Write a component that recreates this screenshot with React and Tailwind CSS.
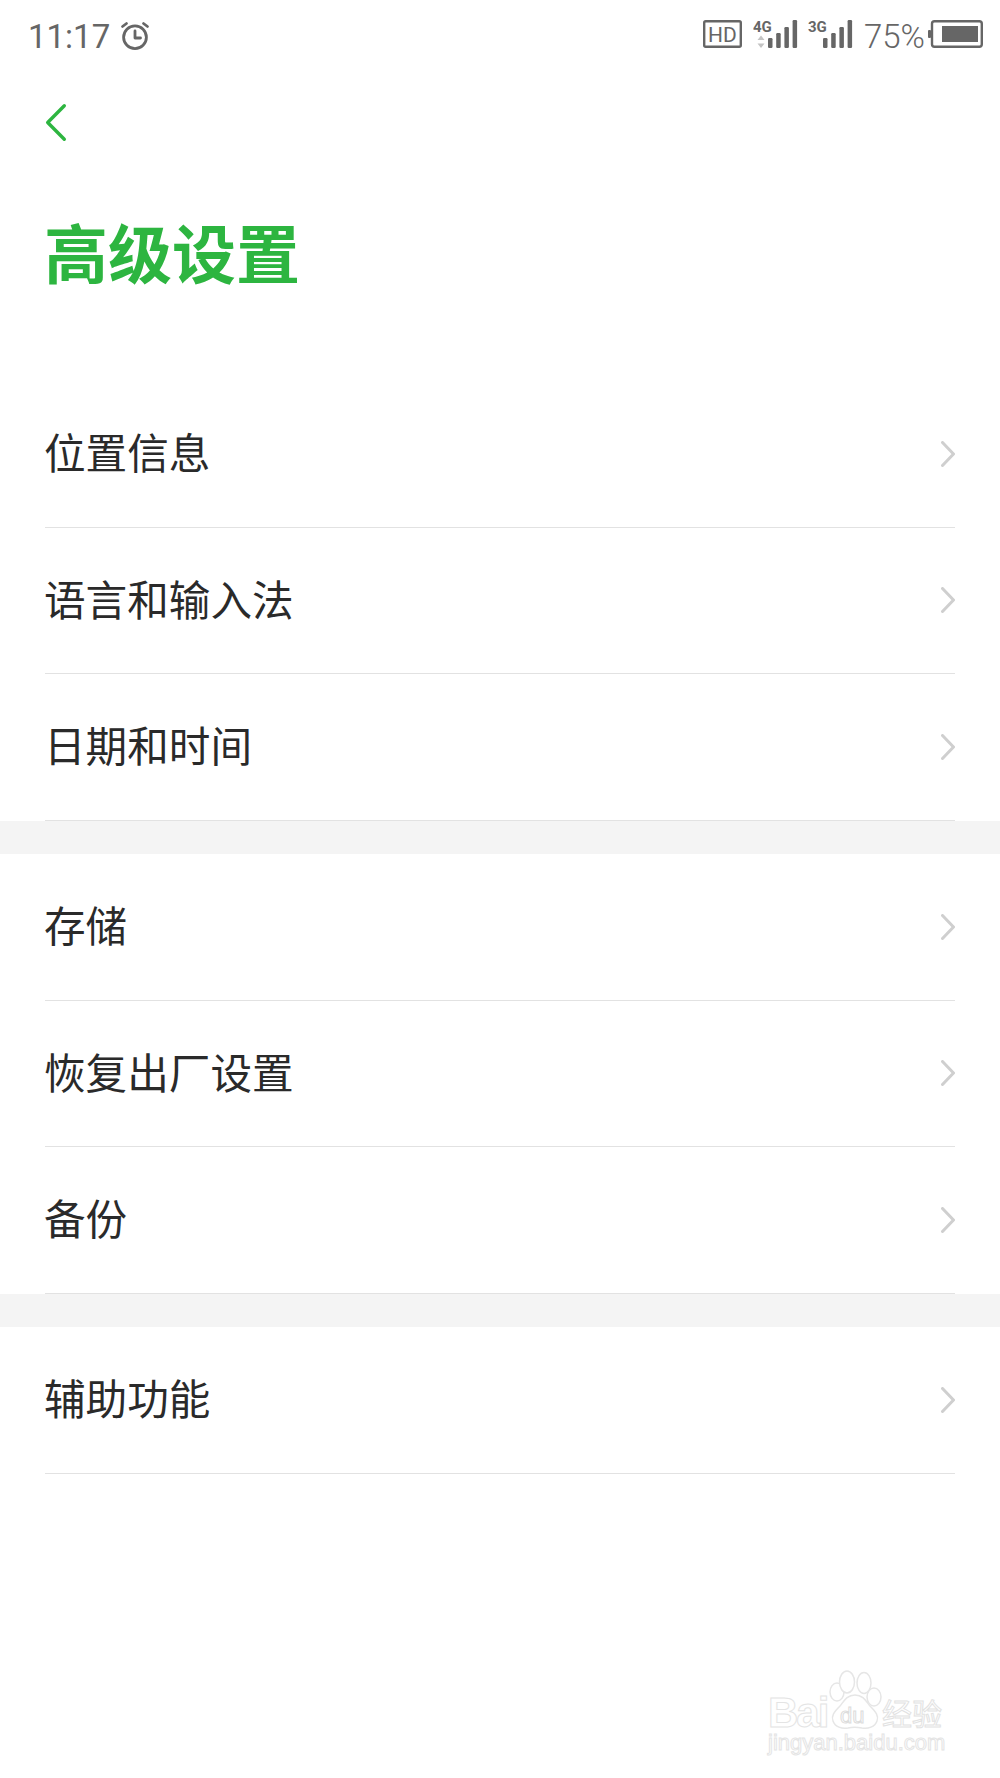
import React from 'react';

const cjk = "font-['Noto_Sans_CJK_SC','Noto_Sans',sans-serif]";

function AlarmIcon() {
    return (
        <svg width="30" height="30" viewBox="0 0 30 30" fill="none" stroke="#666" strokeWidth="2.8" strokeLinecap="round" strokeLinejoin="round">
            <circle cx="15" cy="16.2" r="11.4" />
            <path d="M15 10v7h5.5" />
            <path d="M2.500 5.500l4-3M27.500 5.500l-4-3" />
        </svg>
    );
}

function HdIcon() {
    return (
        <svg width="39" height="28" viewBox="0 0 39 28" fill="none">
            <rect x="1.200" y="1.200" width="36.600" height="25.600" rx="1.500" stroke="#666" strokeWidth="2.400" />
            <text x="19.500" y="21.500" textAnchor="middle" fontSize="21" fontFamily="Roboto, sans-serif" fill="#666">HD</text>
        </svg>
    );
}

function SignalIcon({ label, arrows }) {
    return (
        <svg width="45" height="32" viewBox="0 -4 45 32" fill="#666">
            <text x="0" y="12" fontSize="15" fontWeight="700" fontFamily="Roboto, sans-serif" fill="#666">{label}</text>
            {arrows && <path d="M8 15.500l3.500 4.500h-7zM8 28l3.500-4.500h-7z" fill="#c4c4c4" />}
            <rect x="15" y="18" width="4.500" height="10" rx="1.200" />
            <rect x="23.200" y="13" width="4.500" height="15" rx="1.200" />
            <rect x="31.400" y="7" width="4.500" height="21" rx="1.200" />
            <rect x="39.600" y="0" width="4.500" height="28" rx="1.200" />
        </svg>
    );
}

function BatteryIcon() {
    return (
        <svg width="55" height="28" viewBox="0 0 55 28" fill="none">
            <rect x="4" y="1.200" width="49.800" height="25.600" rx="2.500" stroke="#666" strokeWidth="2.400" />
            <rect x="0" y="10" width="3" height="8" rx="1" fill="#666" />
            <rect x="14" y="6" width="36" height="16" fill="#666" />
        </svg>
    );
}

function Chevron() {
    return (
        <svg width="14" height="26" viewBox="0 0 14 26" fill="none" stroke="#cfcfcf" strokeWidth="3" strokeLinecap="round" strokeLinejoin="round">
            <path d="M1.500 1.500L12.500 13L1.500 24.500" />
        </svg>
    );
}

function Row({ label }) {
    return (
        <div className="px-[45px]">
            <div className="h-[146.5px] flex items-center justify-between border-b border-[#e2e2e2]">
                <span className={`${cjk} text-[41.6px] leading-none text-[#2a2a2a] -ml-[1px] -mt-[3px]`}>{label}</span>
                <Chevron />
            </div>
        </div>
    );
}

function Watermark() {
    return (
        <div className="absolute left-[765px] top-[1668px] w-[190px] h-[92px]">
            <svg width="190" height="66" viewBox="0 0 190 66" fill="#fff" stroke="#e6e6e6" strokeWidth="1.500" className="absolute left-0 top-0">
                <ellipse cx="72" cy="24" rx="7" ry="9" />
                <ellipse cx="82" cy="14" rx="7.500" ry="11" />
                <ellipse cx="99" cy="15" rx="7" ry="10.500" />
                <ellipse cx="109" cy="29" rx="7" ry="9" />
                <path d="M90 27c8 0 11 6 15 11c6 6 9 10 7 15c-2 6-9 8-15 7c-5-1-10-1-14 0c-6 1-13-1-15-7c-2-5 1-9 7-15c4-5 7-11 15-11z" />
            </svg>
            <span className="absolute left-[3px] top-[25px] text-[42px] leading-[40px] tracking-[-2px] font-['Liberation_Sans',sans-serif] font-bold text-white [-webkit-text-stroke:1px_#e4e4e4]">Bai</span>
            <span className="absolute left-[75px] top-[37px] text-[22px] leading-none font-['Liberation_Sans',sans-serif] text-white [-webkit-text-stroke:1px_#dcdcdc]">du</span>
            <span className={`absolute left-[117px] top-[29px] text-[30px] leading-none ${cjk} text-white [-webkit-text-stroke:1px_#e2e2e2]`}>经验</span>
            <span className="absolute left-[3px] top-[65px] text-[22px] leading-[20px] font-['Liberation_Sans',sans-serif] text-white [-webkit-text-stroke:1px_#e4e4e4]">jingyan.baidu.com</span>
        </div>
    );
}

export default function App() {
    return (
        <div className="relative w-[1000px] h-[1778px] bg-white overflow-hidden">
            {/* status bar */}
            <div className="h-[72px] pl-[28px] pr-[17px] flex items-center justify-between">
                <div className="flex items-center gap-[10px]">
                    <span className="font-['Roboto',sans-serif] font-normal text-[33px] leading-none text-[#666]">11:17</span>
                    <AlarmIcon />
                </div>
                <div className="flex items-end mb-[8px]">
                    <HdIcon />
                    <div className="ml-[11px] flex"><SignalIcon label="4G" arrows /></div>
                    <div className="ml-[10px] flex"><SignalIcon label="3G" /></div>
                    <span className="ml-[11px] -mb-[5px] w-[64px] font-['Roboto',sans-serif] font-light text-[33px] leading-none text-[#666]">75%</span>
                    <BatteryIcon />
                </div>
            </div>

            {/* back button */}
            <div className="pl-[45px] h-[98px] pt-[30px]">
                <svg width="24" height="40" viewBox="0 0 24 40" fill="none" stroke="#2db540" strokeWidth="3.400" strokeLinecap="round" strokeLinejoin="round">
                    <path d="M19.300 3.700L2.700 20.500L19.300 37.300" />
                </svg>
            </div>

            {/* title */}
            <h1 className={`${cjk} pl-[44px] h-[211px] pt-[48px] text-[64px] leading-none font-bold text-[#2db540]`}>高级设置</h1>

            <Row label="位置信息" />
            <Row label="语言和输入法" />
            <Row label="日期和时间" />
            <div className="h-[33.5px] bg-[#f4f4f4]" />
            <Row label="存储" />
            <Row label="恢复出厂设置" />
            <Row label="备份" />
            <div className="h-[33.5px] bg-[#f4f4f4]" />
            <Row label="辅助功能" />

            <Watermark />
        </div>
    );
}
